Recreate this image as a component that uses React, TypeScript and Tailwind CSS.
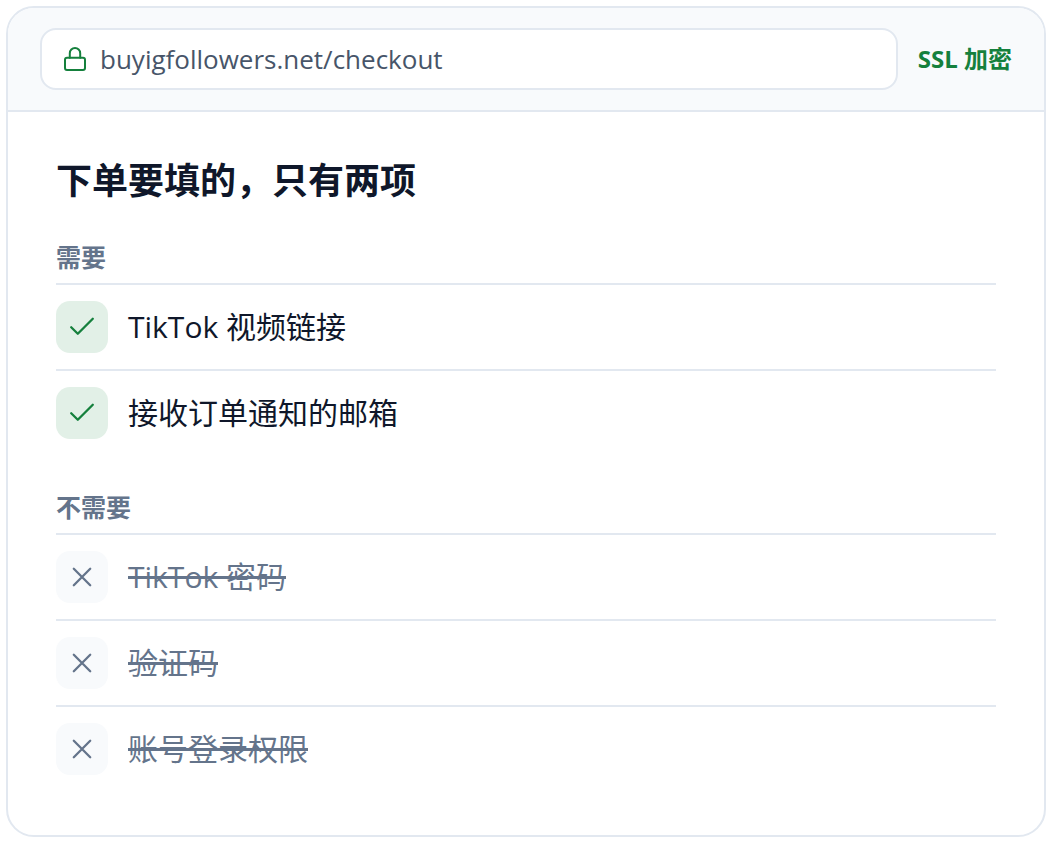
import React from 'react';

const needed = ['TikTok 视频链接', '接收订单通知的邮箱'];
const notNeeded = ['TikTok 密码', '验证码', '账号登录权限'];

function LockIcon() {
  return (
    <svg
      viewBox="0 0 26 26"
      fill="none"
      stroke="currentColor"
      strokeWidth="2"
      strokeLinecap="round"
      strokeLinejoin="round"
      className="size-[26px] shrink-0 text-[#15803d]"
      aria-hidden="true"
    >
      <rect x="3" y="11.8" width="20" height="12.2" rx="2" />
      <path d="M7.8 11.8V7.2a5.2 5.2 0 0 1 10.4 0v4.6" />
    </svg>
  );
}

function CheckIcon() {
  return (
    <svg
      viewBox="0 0 28 28"
      fill="none"
      stroke="currentColor"
      strokeWidth="2.3"
      strokeLinecap="round"
      strokeLinejoin="round"
      className="size-7"
      aria-hidden="true"
    >
      <path d="M3.2 14.2 9.8 20.8 24.8 5.8" />
    </svg>
  );
}

function CrossIcon() {
  return (
    <svg
      viewBox="0 0 28 28"
      fill="none"
      stroke="currentColor"
      strokeWidth="2.3"
      strokeLinecap="round"
      className="size-7"
      aria-hidden="true"
    >
      <path d="M5.8 5.8 22.2 22.2M22.2 5.8 5.8 22.2" />
    </svg>
  );
}

interface FieldGroupProps {
  title: string;
  items: string[];
  required?: boolean;
}

function FieldGroup({ title, items, required = false }: FieldGroupProps) {
  return (
    <section className="mt-9">
      <h2 className="mb-2.5 text-[25px] leading-8 font-bold text-[#64748b]">{title}</h2>
      <ul>
        {items.map((item) => (
          <li key={item} className="flex items-center gap-5 border-t-2 border-[#e2e8f0] py-4">
            <span
              className={`flex size-[52px] shrink-0 items-center justify-center rounded-[14px] ${
                required ? 'bg-[#e2f0e7] text-[#15803d]' : 'bg-[#f8fafc] text-[#64748b]'
              }`}
            >
              {required ? <CheckIcon /> : <CrossIcon />}
            </span>
            <span
              className={`text-[30px] leading-10 ${
                required ? 'text-[#0f172a]' : 'text-[#64748b] line-through decoration-[3px]'
              }`}
            >
              {item}
            </span>
          </li>
        ))}
      </ul>
    </section>
  );
}

export default function App() {
  return (
    <div className="bg-white p-1.5 font-['Open_Sans','Noto_Sans_CJK_SC',sans-serif]">
      <div className="overflow-hidden rounded-[28px] border-2 border-[#e2e8f0] bg-white">
        {/* Address bar */}
        <header className="flex items-center gap-5 border-b-2 border-[#e2e8f0] bg-[#f8fafc] px-8 py-5">
          <label className="flex h-[62px] min-w-0 flex-1 items-center gap-3 rounded-2xl border-2 border-[#e2e8f0] bg-white px-5">
            <LockIcon />
            <input
              type="text"
              readOnly
              aria-label="网址"
              defaultValue="buyigfollowers.net/checkout"
              className="min-w-0 flex-1 bg-transparent text-[26px] leading-9 text-[#475569] outline-none"
            />
          </label>
          <span className="shrink-0 text-2xl font-bold text-[#15803d]">SSL 加密</span>
        </header>

        {/* Checkout fields */}
        <main className="px-12 py-11">
          <h1 className="text-4xl leading-[49px] font-bold text-[#0f172a]">下单要填的，只有两项</h1>
          <FieldGroup title="需要" items={needed} required />
          <FieldGroup title="不需要" items={notNeeded} />
        </main>
      </div>
    </div>
  );
}
